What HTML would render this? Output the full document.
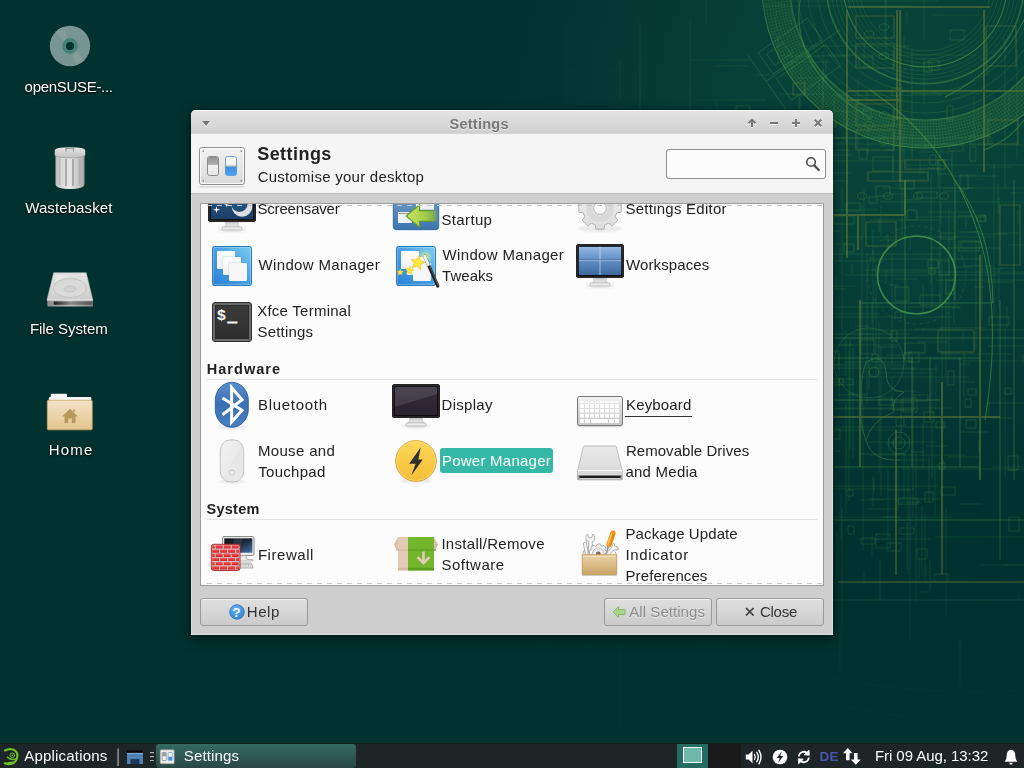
<!DOCTYPE html>
<html>
<head>
<meta charset="utf-8">
<title>Settings</title>
<style>
html,body{margin:0;padding:0}
body{width:1024px;height:768px;overflow:hidden;position:relative;background:#01322f;font-family:"Liberation Sans",sans-serif;font-size:15px;color:#222}
.abs{position:absolute}
.t{position:absolute;white-space:nowrap;font-size:15px;line-height:20px;color:#222}
.b{font-weight:bold;font-size:14.5px}
svg{position:absolute;left:0;top:0;overflow:visible}
#win{position:absolute;left:191px;top:110px;width:642px;height:525px;background:#cecece;border-radius:5px 5px 0 0;box-shadow:inset 1px 0 0 #dcdcdc,inset -1px 0 0 #dcdcdc,inset 0 -1px 0 #dcdcdc,0 0 0 1px rgba(0,0,0,.16),0 3px 13px rgba(0,0,0,.5)}
#tbar{position:absolute;left:0;top:0;width:642px;height:24px;border-radius:5px 5px 0 0;background:linear-gradient(#fafafa 0,#fafafa 1px,#e4e4e4 1px,#cfcfcf 23px,#dcdcdc 24px)}
#hdr{position:absolute;left:0;top:24px;width:642px;height:60px;background:#f5f5f5;border-bottom:1px solid #b9b9b9;box-sizing:border-box}
#search{position:absolute;left:475px;top:39px;width:160px;height:30px;box-sizing:border-box;border:1px solid #8f8f8f;border-radius:3px;background:#fcfcfc}
#frame{position:absolute;left:9px;top:93px;width:624px;height:383px;box-sizing:border-box;border:1px solid #9d9d9d;background:#fcfcfc;overflow:hidden}
.sep{position:absolute;left:6px;width:610px;height:1px;background:#e2e2e2}
.dash{position:absolute;left:1px;width:620px;height:1px;background:repeating-linear-gradient(90deg,transparent 0,transparent 5px,#c6c6c6 5px,#c6c6c6 10px)}
.btn{position:absolute;top:488px;height:28px;box-sizing:border-box;border:1px solid #9a9a9a;border-radius:3px;background:linear-gradient(#dfdfdf,#cbcbcb);box-shadow:inset 0 1px 0 rgba(255,255,255,.55);font-size:15.5px;color:#333;white-space:nowrap;letter-spacing:.2px}
#panel{position:absolute;left:0;top:743px;width:1024px;height:25px;background:#1d2527;color:#fff;font-size:15.5px;border-top:1px solid #151b1c;box-sizing:border-box}
</style>
</head>
<body>
<svg id="bp" width="1024" height="768" viewBox="0 0 1024 768"><defs><radialGradient id="wg1" gradientUnits="userSpaceOnUse" cx="905" cy="110" r="470" gradientTransform="translate(905 110) scale(1 .95) translate(-905 -110)"><stop offset="0" stop-color="#09473a" stop-opacity=".95"/><stop offset=".35" stop-color="#074239" stop-opacity=".9"/><stop offset=".65" stop-color="#053b36" stop-opacity=".65"/><stop offset="1" stop-color="#01322f" stop-opacity="0"/></radialGradient><radialGradient id="wfade" gradientUnits="userSpaceOnUse" cx="930" cy="250" r="480" gradientTransform="translate(930 250) scale(.75 1) translate(-930 -250)"><stop offset="0" stop-color="#fff"/><stop offset=".55" stop-color="#fff" stop-opacity=".9"/><stop offset=".78" stop-color="#fff" stop-opacity=".5"/><stop offset="1" stop-color="#fff" stop-opacity=".1"/></radialGradient><mask id="wm" maskUnits="userSpaceOnUse" x="0" y="0" width="1024" height="768"><rect width="1024" height="768" fill="url(#wfade)"/></mask></defs><rect width="1024" height="768" fill="url(#wg1)"/><g mask="url(#wm)" fill="none"><g stroke="#55a04a" stroke-width=".7" opacity=".33"><circle cx="925" cy="-15" r="66"/><circle cx="925" cy="-15" r="70"/><circle cx="925" cy="-15" r="74"/><circle cx="925" cy="-15" r="78"/><circle cx="925" cy="-15" r="82"/><circle cx="925" cy="-15" r="86"/><circle cx="925" cy="-15" r="90"/><circle cx="925" cy="-15" r="94"/><circle cx="925" cy="-15" r="98"/><circle cx="925" cy="-15" r="108"/><circle cx="925" cy="-15" r="118"/><circle cx="925" cy="-15" r="128"/><circle cx="925" cy="-15" r="136"/><circle cx="925" cy="-15" r="139"/><circle cx="925" cy="-15" r="142"/><circle cx="925" cy="-15" r="145"/><circle cx="925" cy="-15" r="148"/><circle cx="925" cy="-15" r="151"/><circle cx="925" cy="-15" r="154"/><circle cx="925" cy="-15" r="157"/><circle cx="925" cy="-15" r="160"/><circle cx="925" cy="-15" r="163"/></g><g stroke="#5fa84c" stroke-width="1.1" opacity=".5"><circle cx="925" cy="-15" r="82"/><circle cx="925" cy="-15" r="99"/><circle cx="925" cy="-15" r="135"/><circle cx="925" cy="-15" r="163"/></g><circle cx="925" cy="-15" r="149" stroke="#4f9a48" stroke-width="27" opacity=".13"/><path stroke="#55a04a" stroke-width=".5" opacity=".38" d="M1051.4 35.1L1075.6 44.6M1050.4 37.6L1074.4 47.6M1049.4 40.1L1073.1 50.6M1048.2 42.5L1071.8 53.5M1047.1 45L1070.4 56.4M1045.9 47.4L1069 59.3M1044.6 49.8L1067.4 62.2M1043.3 52.1L1065.9 65M1041.9 54.5L1064.3 67.8M1040.5 56.8L1062.6 70.5M1039.1 59.1L1060.9 73.2M1037.6 61.3L1059.1 75.9M1036 63.5L1057.2 78.6M1034.4 65.7L1055.4 81.2M1032.8 67.9L1053.4 83.8M1031.1 70L1051.4 86.3M1029.4 72.1L1049.4 88.8M1027.7 74.2L1047.3 91.2M1025.9 76.2L1045.2 93.7M1024 78.2L1043 96M1022.2 80.2L1040.7 98.3M1020.3 82.1L1038.5 100.6M1018.3 83.9L1036.1 102.9M1016.3 85.8L1033.8 105M1014.3 87.6L1031.4 107.2M1012.2 89.3L1028.9 109.3M1010.1 91L1026.4 111.3M1008 92.7L1023.9 113.3M1005.9 94.4L1021.3 115.3M1003.7 95.9L1018.7 117.1M1001.4 97.5L1016.1 119M999.2 99L1013.4 120.8M996.9 100.4L1010.7 122.5M994.6 101.8L1007.9 124.2M992.3 103.2L1005.1 125.8M989.9 104.5L1002.3 127.4M987.5 105.8L999.5 128.9M985.1 107L996.6 130.3M982.6 108.2L993.7 131.7M980.2 109.3L990.7 133.1M977.7 110.4L987.8 134.3M975.2 111.4L984.8 135.6M972.7 112.4L981.8 136.7M970.1 113.3L978.8 137.8M967.6 114.2L975.7 138.9M965 115L972.6 139.8M962.4 115.8L969.5 140.8M959.8 116.5L966.4 141.6M957.2 117.1L963.3 142.4M954.5 117.8L960.2 143.1M951.9 118.3L957 143.8M949.2 118.8L953.9 144.4M946.6 119.3L950.7 145M943.9 119.7L947.5 145.4M941.2 120L944.3 145.8M938.5 120.3L941.1 146.2M935.8 120.6L937.9 146.5M933.1 120.8L934.7 146.7M930.4 120.9L931.4 146.9M927.7 121L928.2 147M925 121L925 147M922.3 121L921.8 147M919.6 120.9L918.6 146.9M916.9 120.8L915.3 146.7M914.2 120.6L912.1 146.5M911.5 120.3L908.9 146.2M908.8 120L905.7 145.8M906.1 119.7L902.5 145.4M903.4 119.3L899.3 145M900.8 118.8L896.1 144.4M898.1 118.3L893 143.8M895.5 117.8L889.8 143.1M892.8 117.1L886.7 142.4M890.2 116.5L883.6 141.6M887.6 115.8L880.5 140.8M885 115L877.4 139.8M882.4 114.2L874.3 138.9M879.9 113.3L871.2 137.8M877.3 112.4L868.2 136.7M874.8 111.4L865.2 135.6M872.3 110.4L862.2 134.3M869.8 109.3L859.3 133.1M867.4 108.2L856.3 131.7M864.9 107L853.4 130.3M862.5 105.8L850.5 128.9M860.1 104.5L847.7 127.4M857.7 103.2L844.9 125.8M855.4 101.8L842.1 124.2M853.1 100.4L839.3 122.5M850.8 99L836.6 120.8M848.6 97.5L833.9 119M846.3 95.9L831.3 117.1M844.1 94.4L828.7 115.3M842 92.7L826.1 113.3M839.9 91L823.6 111.3M837.8 89.3L821.1 109.3M835.7 87.6L818.6 107.2M833.7 85.8L816.2 105M831.7 83.9L813.9 102.9M829.7 82.1L811.5 100.6M827.8 80.2L809.3 98.3M826 78.2L807 96M824.1 76.2L804.8 93.7M822.3 74.2L802.7 91.2M820.6 72.1L800.6 88.8M818.9 70L798.6 86.3M817.2 67.9L796.6 83.8M815.6 65.7L794.6 81.2M814 63.5L792.8 78.6M812.4 61.3L790.9 75.9M810.9 59.1L789.1 73.2M809.5 56.8L787.4 70.5M808.1 54.5L785.7 67.8M806.7 52.1L784.1 65M805.4 49.8L782.6 62.2M804.1 47.4L781 59.3M802.9 45L779.6 56.4M801.8 42.5L778.2 53.5M800.6 40.1L776.9 50.6M799.6 37.6L775.6 47.6M798.6 35.1L774.4 44.6M797.6 32.5L773.2 41.6M796.7 30L772.1 38.6M795.8 27.4L771.1 35.5M795 24.9L770.1 32.5M794.2 22.3L769.2 29.4M793.5 19.6L768.3 26.3M792.8 17L767.6 23.1M792.2 14.4L766.8 20M791.7 11.7L766.2 16.9M791.1 9.1L765.6 13.7M790.7 6.4L765 10.5M790.3 3.7L764.5 7.3M790 1.1L764.1 4.1M789.7 -1.6L763.8 0.9"/><g stroke="#4e9c53"><circle cx="916.5" cy="275" r="39" stroke-width="1.6" opacity=".8"/><circle cx="916.5" cy="275" r="49" stroke-width=".6" opacity=".35" stroke-dasharray="4 3"/><circle cx="869" cy="363" r="35" stroke-width=".9" opacity=".35"/><circle cx="899" cy="443" r="11" stroke-width=".8" opacity=".45"/><circle cx="899" cy="443" r="6" stroke-width=".8" opacity=".45"/><circle cx="874" cy="372" r="5" stroke-width=".8" opacity=".5"/></g><g stroke="#4a9a4a" stroke-width="1.1" opacity=".6"><path d="M953 178 Q992 228 993 303"/><path d="M870 90 Q960 150 985 258 Q1000 330 985 420"/><path d="M945 97 Q1000 70 1024 20"/><path d="M800 0 Q790 70 870 118"/><path d="M984 150 Q1010 140 1024 120"/><path d="M720 655 Q850 735 1024 715" opacity=".45"/><path d="M700 640 Q850 700 1024 690" opacity=".3"/></g><path stroke="#4a9a50" stroke-width=".9" opacity=".5" d="M866 362 Q884 352 886 372 Q886 392 904 392 Q890 400 894 412 Q872 420 866 440 Q858 420 862 395 Q860 378 866 362Z M866 440 Q872 462 900 460"/><path stroke="#6a7a34" stroke-width="2" opacity=".58" d="M900 10L900 182M897 10L897 120M984 10L984 172M847 10L847 258M848 7L990 7M848 91L1024 91M848 100L900 100M980 255L980 480M860 300L860 467M833 417L1000 417M838 582L1024 582M896 430L896 575M833 215L905 215M858 215L858 250M905 180L905 215M768 172L768 250M690 250L830 250M942 382L942 575"/><path stroke="#66783a" stroke-width="1.2" opacity=".5" d="M856 16h38v22h-38zM856 44h38v24h-38zM856 104h38v22h-38zM856 130h38v20h-38zM868 172h60v9h-60zM905 160h40v9h-40zM735 118h9v9h-9zM793 83h12v12h-12zM986 26h30v40h-30zM988 120h30v24h-30zM1000 205h20v60h-20zM938 330h36v22h-36zM866 222h30v24h-30z"/><g stroke="#5d8a44" stroke-width=".8" opacity=".5"><ellipse cx="884" cy="27" rx="4.5" ry="3.2"/><ellipse cx="884" cy="56" rx="4.5" ry="3.2"/><ellipse cx="884" cy="115" rx="4.5" ry="3.2"/><ellipse cx="884" cy="141" rx="4.5" ry="3.2"/><ellipse cx="862" cy="196" rx="4.5" ry="3.2"/><ellipse cx="888" cy="196" rx="4.5" ry="3.2"/><ellipse cx="918" cy="196" rx="4.5" ry="3.2"/><ellipse cx="944" cy="196" rx="4.5" ry="3.2"/><ellipse cx="869" cy="125" rx="4.5" ry="3.2"/><ellipse cx="869" cy="34" rx="4.5" ry="3.2"/></g><path stroke="#479650" stroke-width="1" opacity=".5" d="M859 303L993 303M833 358L980 358M833 467L980 467M1014 180L1014 480M833 338L1024 338M905 180L905 360M955 180L955 300M833 400L940 400M912 358L912 467M930 358L930 420M960 358L960 467M700 300L700 560M740 330L740 560M833 520L1024 520M1000 300L1000 560M833 180L833 575M620 60L620 100M640 20L640 110"/><g stroke="#4a9a50" stroke-width=".8" opacity=".45" transform="rotate(-35 800 60)"><rect x="770" y="30" width="60" height="26"/><rect x="770" y="62" width="60" height="26"/><rect x="776" y="36" width="20" height="14"/><path d="M760 58H850M760 26V96"/></g><path stroke="#4a8f4c" stroke-width=".7" opacity=".34" d="M876 397h10M817 240v10M859 377h110M989 402v14M819 82v10M892 397v14M771 166v14M846 128v14M823 68v110M660 392h70M910 489v150M888 118h14M766 453v22M691 537v14M696 100h70M764 489h150M961 382h14M789 1h150M799 490v10M750 517h150M896 180h30M990 167h22M717 102v110M888 469v70M848 394h14M913 367v150M926 446h22M821 478v22M769 262h10M799 46h110M1007 470h10M1000 268h14M907 280v22M1029 192v14M864 189v46M819 140v14M936 280h150M980 565h46M864 38v30M852 264v10M864 571v14M888 490h22M925 513v70M778 33v30M922 506v70M809 314h70M977 234h30M820 251v150M768 322v14M959 432h30M999 198v110M942 353h22M816 152v22M781 155h70M886 270v14M998 184v30M923 422v46M912 49v110M1017 49v110M941 202v22M1007 306v22M903 172h22M886 -10v70M798 237v14M963 333v10M776 277h14M819 113v30M793 291v150M907 523v46M880 202h150M979 440v14M846 330v46M914 217h70M802 435h30M766 395h70M844 362h70M803 215h10M819 271h14M958 216h14M807 360v150M922 329h22M792 1v14M911 452h14M841 493v46M901 399v46M842 187v150M943 459v10M923 284v30M908 464v110M714 142v46M981 269h22M876 347h22M876 265v110M868 125v30M940 328h46M1008 245h30M943 191h22M811 451h30M905 200h14M801 181h46M919 556v22M765 409h150M1009 94v22M907 13v10M717 66h30M994 164v150M797 78h30M904 35v14M881 373h46M833 138h150M825 428v46M804 81v14M837 533v46M903 469h150M761 6h150M799 191v150M1025 256v46M846 275h150M984 282h30M898 465v46M810 144h150M854 95h22M836 365h70M827 486h110M931 174v110M952 150v10M870 455h70M1010 193h14M893 50v22M887 355h22M839 354v46M963 266h30M816 205v22M1005 328v150M748 345h150M826 244h22M964 351v46M856 330h110M880 146h46M941 354h70M756 284h30M905 165h150M954 213v110M915 145h150M736 518v150M894 391h22M875 272h150M895 279h22M1025 121v46M823 51v110M918 342h30M926 566v10M982 251v70M985 116v30M978 330h46M881 206v30M966 217v10M832 95h110M826 286h30M919 152h30M940 150v150M992 138v10M948 457h30M819 166h10M763 358v70M801 408h150M858 79v70M855 326h14M929 457v46M802 317h150M770 231h70M869 259h110M782 138h110M951 176h46M932 237v70M756 75h14M916 452v150M850 339v110M980 467v10M924 -29v70M744 373v14M806 368h110M988 346h70M858 334h14M942 263v150M952 267h22M801 67v14M861 454h46M885 150h30M897 460h30M836 276v14M949 209v150M882 517h70M892 377v30M927 168h14M974 96v46M865 270h70M869 360v30M911 94h70M881 346v150M946 273v110M960 504h22M851 100h10M768 210h110M792 125h110M749 414v110M786 562h22M721 194h110M828 150h22M874 539h14M719 313h30M845 237h150M800 96v14M776 10v22M987 46v30M932 369v110M944 455h22M1023 354v10M863 401v150M793 161h110M870 499h70M811 307h150M780 311v150M934 93h14M867 254v150M879 240h22M873 230v110M910 236v14M667 306v22M893 109v70M904 453v46M760 334h150M861 539h70M935 470v46M928 212h46M772 198v70M788 364h14M687 198h70M994 274h70M960 364h10M824 237v70M904 118v46M796 394h10M920 592h10M831 182v70M825 382h22M817 123h22M872 302v22M924 58v46M1005 39v150M795 252v22M963 361h110M993 467h30M946 508v110M942 428v46M788 271v110M827 55h150M974 287h10M970 232h10M786 215h46M991 418h22M797 427h150M889 285h10M885 -2v46M796 465h22M938 307h22M914 329h10M888 234v14M986 403h70M1018 210v14M837 395h30M933 15h46M1003 565h30M832 430h70M849 351v150M832 254h110M862 204v150M840 248v14M867 509h30M870 220h70M736 299v22M706 -23v46M958 232h22M879 218v14M846 403v110M897 70h10M861 500h22M882 188h150M779 111h10M879 323v150M902 87v150M867 442h70M943 188h30M792 49v30M820 173h30M892 194h14M936 364v46M840 345h14M980 135h10M696 289h150M976 240v110M788 117v30M826 59v30M804 111h70M899 502h22M812 342v110M967 175h10M643 326h10M930 248h70M799 97v150M733 261h150M867 91v14M780 94h46M892 255v110M784 62h46M873 476v30M997 233h22M834 98v30M935 537h110M872 534v22M727 360h30M853 348v110M711 334h46M783 138h150M779 56h70M874 479v14M1019 591v10M891 369h46M932 359h30M746 384v30M920 160v14M938 157v30M900 58v14M888 443h22M803 194v22M901 416h10M842 508v150"/><path stroke="#5a9a4a" stroke-width=".7" opacity=".4" d="M949 145h14v6h-14zM939 463h6v6h-6zM806 117h10v6h-10zM807 285h8v6h-8zM925 492h8v10h-8zM1008 456h10v14h-10zM924 62h8v10h-8zM823 379h20v6h-20zM938 160h14v14h-14zM960 175h8v14h-8zM925 136h10v10h-10zM818 443h14v6h-14zM872 354h6v8h-6zM947 106h6v14h-6zM816 121h20v6h-20zM934 574h14v8h-14zM948 371h6v14h-6zM859 149h8v10h-8zM844 244h10v8h-10zM839 379h14v6h-14zM802 303h6v14h-6zM736 106h14v6h-14zM989 317h20v8h-20zM818 330h6v6h-6zM869 197h8v6h-8zM895 312h6v6h-6zM914 395h14v6h-14zM887 543h14v8h-14zM977 215h8v6h-8zM876 534h14v14h-14zM929 268h6v6h-6zM859 57h14v10h-14zM861 538h14v6h-14zM892 88h8v8h-8zM946 280h8v14h-8zM759 348h14v10h-14zM929 60h10v10h-10zM848 526h6v8h-6zM846 203h14v8h-14zM813 502h20v8h-20zM930 155h6v10h-6zM898 498h20v6h-20zM894 402h20v8h-20zM950 30h14v10h-14zM802 249h14v14h-14zM961 242h20v6h-20zM863 109h8v10h-8zM895 287h14v14h-14zM803 241h10v6h-10zM917 549h10v10h-10zM793 337h8v8h-8zM924 412h10v10h-10zM834 216h20v8h-20zM735 316h10v14h-10zM917 192h20v6h-20zM847 490h6v6h-6zM970 136h20v8h-20zM721 506h20v8h-20zM904 353h8v8h-8zM891 331h6v10h-6zM970 147h6v14h-6zM968 389h8v6h-8zM832 429h8v10h-8zM909 352h10v10h-10zM1005 388h6v6h-6zM900 528h14v6h-14zM965 399h6v8h-6zM873 157h20v14h-20zM907 210h10v10h-10zM903 398h14v14h-14zM936 422h8v6h-8zM721 384h6v8h-6zM959 241h20v10h-20zM941 233h14v6h-14zM980 216h6v6h-6zM831 351h8v14h-8zM966 420h10v8h-10zM900 181h14v8h-14zM860 340h14v14h-14zM905 343h20v10h-20zM879 399h14v6h-14zM876 186h14v10h-14zM1009 517h10v14h-10zM939 261h10v14h-10zM928 260h10v8h-10zM920 295h20v10h-20zM813 286h20v10h-20zM941 487h14v8h-14zM896 418h8v8h-8z"/><path stroke="#3f8f58" stroke-width=".7" opacity=".5" d="M566 110V20M566 40h40M566 70h60M690 20v90M690 60h60M560 600h464M590 570v170M620 600v130M545 600a5 5 0 1 0 .1 0M545 626a5 5 0 1 0 .1 0M545 645a5 5 0 1 0 .1 0M710 590v60M840 630v40M960 640v50M880 560v40M930 560v30"/></g></svg>
<!-- desktop icons -->
<svg width="1024" height="768" viewBox="0 0 1024 768">
 <defs>
  <linearGradient id="gTrash" x1="0" x2="1" y1="0" y2="0"><stop offset="0" stop-color="#b9b9b9"/><stop offset=".2" stop-color="#d8d8d8"/><stop offset=".5" stop-color="#e6e6e6"/><stop offset=".8" stop-color="#c4c4c4"/><stop offset="1" stop-color="#a2a2a2"/></linearGradient>
  <linearGradient id="gLid" x1="0" x2="0" y1="0" y2="1"><stop offset="0" stop-color="#e4e4e4"/><stop offset="1" stop-color="#c2c2c2"/></linearGradient>
  <linearGradient id="gFold" x1="0" x2="0" y1="0" y2="1"><stop offset="0" stop-color="#f3e2c6"/><stop offset="1" stop-color="#e3c58e"/></linearGradient>
  <linearGradient id="gHdd" x1="0" x2="0" y1="0" y2="1"><stop offset="0" stop-color="#e4e4e4"/><stop offset="1" stop-color="#cdcdcd"/></linearGradient>
  <linearGradient id="gHddF" x1="0" x2="1" y1="0" y2="0"><stop offset="0" stop-color="#8a8a8a"/><stop offset=".5" stop-color="#bdbdbd"/><stop offset="1" stop-color="#8a8a8a"/></linearGradient>
  <linearGradient id="gSlot" x1="0" x2="1" y1="0" y2="0"><stop offset="0" stop-color="#222"/><stop offset=".45" stop-color="#8a8a8a"/><stop offset="1" stop-color="#555"/></linearGradient>
 </defs>
 <!-- disc -->
 <g opacity=".97">
  <circle cx="70" cy="46" r="20.2" fill="#7c9997"/>
  <path d="M70 46 L55 32 A20.2 20.2 0 0 1 64 27Z" fill="#93a79a" opacity=".55"/>
  <path d="M70 46 L85 60 A20.2 20.2 0 0 1 76 65Z" fill="#93a79a" opacity=".55"/>
  <circle cx="70" cy="46" r="7.9" fill="#4c857b"/>
  <circle cx="70" cy="46" r="4" fill="#01342f"/>
 </g>
 <!-- trash -->
 <g>
  <path d="M55.5 156 L84.5 156 L84.5 184 Q84.5 189 70 189 Q55.5 189 55.5 184Z" fill="url(#gTrash)"/>
  <rect x="65" y="159" width="2" height="27" fill="#9d9d9d" opacity=".8"/>
  <rect x="72" y="159" width="2" height="27" fill="#9d9d9d" opacity=".8"/>
  <rect x="59" y="159" width="1.5" height="26" fill="#a8a8a8" opacity=".6"/>
  <rect x="79" y="159" width="1.5" height="26" fill="#a0a0a0" opacity=".6"/>
  <path d="M54.8 150.5 Q54.8 147.3 70 147.3 Q85.2 147.3 85.2 150.5 L85.2 155 Q85.2 157.8 70 157.8 Q54.8 157.8 54.8 155Z" fill="url(#gLid)"/>
  <path d="M54.8 154.5 Q54.8 157.8 70 157.8 Q85.2 157.8 85.2 154.5" fill="none" stroke="#9a9a9a" stroke-width=".8"/>
  <path d="M66 151.5 V148.3 H73.5 V151.5" fill="none" stroke="#9a9a9a" stroke-width="1.3"/>
 </g>
 <!-- hdd -->
 <g>
  <path d="M53.7 272.8 L86.2 272.8 L92.8 300 L47 300Z" fill="url(#gHdd)" stroke="#bdbdbd" stroke-width=".6"/>
  <ellipse cx="70" cy="288" rx="16.5" ry="9.5" fill="#dadada" stroke="#c1c1c1" stroke-width=".9"/>
  <ellipse cx="70" cy="289" rx="6" ry="3" fill="#d2d2d2" stroke="#bfbfbf" stroke-width=".8"/>
  <path d="M55 283 Q60 278 69 276 L57 275.3 Z" fill="#ececec" opacity=".8"/>
  <path d="M47 300 H92.8 V306.5 H47.6Z" fill="url(#gHddF)"/>
  <rect x="53.7" y="301.5" width="38.5" height="3.3" fill="url(#gSlot)"/>
  <rect x="47" y="299.5" width="45.8" height="1" fill="#efefef"/>
 </g>
 <!-- home folder -->
 <g>
  <path d="M50.8 394.8 Q50.8 393.8 51.8 393.8 H66 Q67 393.8 67 394.8 V397 H90.5 Q91.3 397 91.3 398 V402 H48.8 V398 Q48.8 397 50.8 396.8Z" fill="#f4f4f7"/>
  <rect x="47.3" y="400.3" width="44.9" height="29.5" rx="1" fill="url(#gFold)" stroke="#caa667" stroke-width=".8"/>
  <path d="M70 408.8 L78 416.5 H75.5 V423 H71.8 V418.5 H68.2 V423 H64.5 V416.5 H62 Z" fill="#b9995f"/>
  <rect x="73.3" y="409.5" width="1.5" height="2.5" fill="#b9995f"/>
 </g>
</svg>
<span class="t" style="left:24.6px;top:77px;letter-spacing:-0.3px;color:#fff;text-shadow:0 1px 2px rgba(0,0,0,.95),0 0 2px rgba(0,0,0,.6);">openSUSE-...</span>
<span class="t" style="left:25.2px;top:198px;letter-spacing:0.1px;color:#fff;text-shadow:0 1px 2px rgba(0,0,0,.95),0 0 2px rgba(0,0,0,.6);">Wastebasket</span>
<span class="t" style="left:29.9px;top:319px;letter-spacing:-0.05px;color:#fff;text-shadow:0 1px 2px rgba(0,0,0,.95),0 0 2px rgba(0,0,0,.6);">File System</span>
<span class="t" style="left:48.8px;top:440px;letter-spacing:1.2px;color:#fff;text-shadow:0 1px 2px rgba(0,0,0,.95),0 0 2px rgba(0,0,0,.6);">Home</span>
<div id="win">
 <div id="tbar"><span class="t b" style="left:258.5px;top:4px;letter-spacing:0.25px;color:#777;text-shadow:0 1px 0 rgba(255,255,255,.7);">Settings</span>
  <svg width="641" height="24" viewBox="0 0 641 24">
   <path d="M11 12 H19 L15 17Z" fill="#fff"/>
   <path d="M11 11 H19 L15 16Z" fill="#777"/>
   <g stroke="#fff" stroke-width="2" fill="none" transform="translate(0,1)">
    <path d="M561 17 V10.5 M557.5 13.3 L561 9.8 L564.5 13.3"/>
    <path d="M579 13 H587"/>
    <path d="M601 13 H609 M605 9 V17"/>
    <path d="M623.7 9.7 L630.3 16.3 M630.3 9.7 L623.7 16.3"/>
   </g>
   <g stroke="#777" stroke-width="2" fill="none">
    <path d="M561 17 V10.5 M557.5 13.3 L561 9.8 L564.5 13.3"/>
    <path d="M579 13 H587"/>
    <path d="M601 13 H609 M605 9 V17"/>
    <path d="M623.7 9.7 L630.3 16.3 M630.3 9.7 L623.7 16.3"/>
   </g>
  </svg>
 </div>
 <div id="hdr"></div>
 <div id="search"></div>
 <svg width="641" height="90" viewBox="191 110 641 90">
  <defs>
   <linearGradient id="gPl" x1="0" x2="0" y1="0" y2="1"><stop offset="0" stop-color="#f2f2f2"/><stop offset="1" stop-color="#dadada"/></linearGradient>
   <linearGradient id="gSwW" x1="0" x2="0" y1="0" y2="1"><stop offset="0" stop-color="#fdfdfd"/><stop offset="1" stop-color="#e4e4e4"/></linearGradient>
   <linearGradient id="gSwG" x1="0" x2="0" y1="0" y2="1"><stop offset="0" stop-color="#909090"/><stop offset="1" stop-color="#b2b2b2"/></linearGradient>
   <linearGradient id="gSwB" x1="0" x2="0" y1="0" y2="1"><stop offset="0" stop-color="#3b8ade"/><stop offset="1" stop-color="#55a4ec"/></linearGradient>
  </defs>
  <rect x="199.5" y="186" width="45" height="1.5" fill="#000" opacity=".12"/>
  <rect x="199.5" y="147.5" width="45" height="37" rx="2" fill="url(#gPl)" stroke="#8f8f8f"/>
  <rect x="200.5" y="148.5" width="43" height="35" rx="1.5" fill="none" stroke="#fff" opacity=".8"/>
  <g fill="#8a8a8a"><rect x="202.5" y="150.5" width="1.5" height="1.5"/><rect x="240.5" y="150.5" width="1.5" height="1.5"/><rect x="202.5" y="180" width="1.5" height="1.5"/><rect x="240.5" y="180" width="1.5" height="1.5"/></g>
  <rect x="207.5" y="156.5" width="11" height="19" rx="2" fill="url(#gSwW)" stroke="#8a8a8a"/>
  <path d="M208 158.5 Q208 157 209.5 157 H216.5 Q218 157 218 158.5 V165 H208Z" fill="url(#gSwG)"/>
  <rect x="225.5" y="156.5" width="11" height="19" rx="2" fill="url(#gSwW)" stroke="#6e9fd6"/>
  <path d="M225.5 166.5 H236.5 V174 Q236.5 175.5 235 175.5 H227 Q225.5 175.5 225.5 174Z" fill="url(#gSwB)"/>
  <path d="M226 166 H236" stroke="#9a9a9a" stroke-width=".8"/>
  <!-- search icon -->
  <circle cx="811" cy="162" r="4.3" fill="none" stroke="#4a4a4a" stroke-width="1.6"/>
  <path d="M814.2 165.4 L818.8 170" stroke="#4a4a4a" stroke-width="2.2" stroke-linecap="round"/>
 </svg>
 <span class="t b" style="left:66.2px;top:34px;letter-spacing:0.45px;font-size:18px;">Settings</span>
 <span class="t" style="left:66.7px;top:56.5px;letter-spacing:0.25px;">Customise your desktop</span>
 <div id="frame">
  <svg width="622" height="381" viewBox="201 204 622 381">
   <defs>
    <linearGradient id="gNeck" x1="0" x2="0" y1="0" y2="1"><stop offset="0" stop-color="#bdbdbd"/><stop offset="1" stop-color="#f2f2f2"/></linearGradient>
    <linearGradient id="gScrB" x1="0" x2="0" y1="0" y2="1"><stop offset="0" stop-color="#93b8e4"/><stop offset=".5" stop-color="#5f8cc2"/><stop offset="1" stop-color="#3b689f"/></linearGradient>
    <linearGradient id="gScrN" x1="0" x2="0" y1="0" y2="1"><stop offset="0" stop-color="#2a5a8a"/><stop offset="1" stop-color="#1b4068"/></linearGradient>
    <linearGradient id="gScrD" x1="0" x2="0" y1="0" y2="1"><stop offset="0" stop-color="#352f39"/><stop offset="1" stop-color="#29222d"/></linearGradient>
    <linearGradient id="gWm" x1="1" x2="0" y1="0" y2="1"><stop offset="0" stop-color="#7fcdee"/><stop offset=".45" stop-color="#4aa3e4"/><stop offset="1" stop-color="#2a7fd3"/></linearGradient>
    <linearGradient id="gSq" x1="0" x2="0" y1="0" y2="1"><stop offset="0" stop-color="#fdfdfd"/><stop offset="1" stop-color="#f0f0f0"/></linearGradient>
    <linearGradient id="gSt" x1="0" x2="0" y1="0" y2="1"><stop offset="0" stop-color="#7ba6cc"/><stop offset="1" stop-color="#3c74ad"/></linearGradient>
    <linearGradient id="gArr" x1="0" x2="1" y1="0" y2="0"><stop offset="0" stop-color="#c6e36a"/><stop offset=".6" stop-color="#a2cc44"/><stop offset=".85" stop-color="#8dbb3a" stop-opacity=".8"/><stop offset="1" stop-color="#8dbb3a" stop-opacity="0"/></linearGradient>
    <linearGradient id="gArrS" x1="0" x2="1" y1="0" y2="0"><stop offset="0" stop-color="#5d9a1c"/><stop offset=".7" stop-color="#5d9a1c"/><stop offset="1" stop-color="#5d9a1c" stop-opacity="0"/></linearGradient>
    <linearGradient id="gGear" x1="0" x2="0" y1="0" y2="1"><stop offset="0" stop-color="#f2f2f2"/><stop offset="1" stop-color="#dcdcdc"/></linearGradient>
    <linearGradient id="gBt" x1="0" x2="0" y1="0" y2="1"><stop offset="0" stop-color="#5b8fcc"/><stop offset=".5" stop-color="#3a70b3"/><stop offset="1" stop-color="#4a80c0"/></linearGradient>
    <linearGradient id="gKb" x1="0" x2="0" y1="0" y2="1"><stop offset="0" stop-color="#ededed"/><stop offset="1" stop-color="#c6c6c6"/></linearGradient>
    <linearGradient id="gMs" x1="0" x2="1" y1="0" y2="1"><stop offset="0" stop-color="#f2f2f2"/><stop offset=".5" stop-color="#ebebeb"/><stop offset=".52" stop-color="#e6e6e6"/><stop offset="1" stop-color="#e8e8e8"/></linearGradient>
    <linearGradient id="gPw" x1="0" x2="0" y1="0" y2="1"><stop offset="0" stop-color="#fdd75a"/><stop offset="1" stop-color="#f5bf36"/></linearGradient>
    <linearGradient id="gRm" x1="0" x2="0" y1="0" y2="1"><stop offset="0" stop-color="#ececec"/><stop offset="1" stop-color="#d4d4d4"/></linearGradient>
    <linearGradient id="gBrick" x1="0" x2="0" y1="0" y2="1"><stop offset="0" stop-color="#f8585a"/><stop offset="1" stop-color="#dc1c22"/></linearGradient>
    <linearGradient id="gFwS" x1="0" x2="1" y1="0" y2="1"><stop offset="0" stop-color="#151515"/><stop offset=".5" stop-color="#1e2a3a"/><stop offset="1" stop-color="#3f72ad"/></linearGradient>
    <linearGradient id="gBox" x1="0" x2="0" y1="0" y2="1"><stop offset="0" stop-color="#ecd3a6"/><stop offset="1" stop-color="#c9a468"/></linearGradient>
    <linearGradient id="gTerm" x1="0" x2="0" y1="0" y2="1"><stop offset="0" stop-color="#3c3c3c"/><stop offset="1" stop-color="#2e2e2e"/></linearGradient>
    <radialGradient id="gGlow"><stop offset="0" stop-color="#f4f7a0" stop-opacity=".95"/><stop offset="1" stop-color="#d8f080" stop-opacity="0"/></radialGradient>
    <g id="mon">
     <ellipse cx="24" cy="42" rx="14" ry="2" fill="#000" opacity=".1" filter="url(#bl)"/>
     <path d="M18 33 H30 L31.5 39.5 H16.5Z" fill="url(#gNeck)" stroke="#b4b4b4" stroke-width=".5"/>
     <rect x="14" y="38.8" width="20" height="3.2" rx="1.6" fill="#ececec" stroke="#a9a9a9" stroke-width=".7"/>
     <rect x="0" y="0" width="48" height="34" rx="2.5" fill="#0c0c0c"/>
     <rect x="1" y="1" width="46" height="32" rx="2" fill="none" stroke="#3c3c3c" stroke-width="1"/>
    </g>
    <filter id="bl" x="-20%" y="-100%" width="140%" height="300%"><feGaussianBlur stdDeviation="1.3"/></filter>
    <path id="star" d="M0 -1 L.26 -.36 L.95 -.31 L.42 .14 L.59 .81 L0 .44 L-.59 .81 L-.42 .14 L-.95 -.31 L-.26 -.36Z"/>
   </defs>

   <!-- screensaver -->
   <use href="#mon" x="208" y="188"/>
   <rect x="210.8" y="190.8" width="42.4" height="28.2" fill="url(#gScrN)"/>
   <circle cx="242" cy="206.5" r="10.3" fill="#dde0e3"/>
   <circle cx="239.4" cy="203.6" r="8.3" fill="#22507d"/>
   <path d="M216.5 206 L217.2 209 L220.2 209.7 L217.2 210.4 L216.5 213.4 L215.8 210.4 L212.8 209.7 L215.8 209Z" fill="#fff"/>
   <path d="M226.5 202 L227 204.2 L229.2 204.7 L227 205.2 L226.5 207.4 L226 205.2 L223.8 204.7 L226 204.2Z" fill="#fff"/>

   <!-- startup -->
   <rect x="393.3" y="187" width="45.4" height="42.7" rx="3" fill="url(#gSt)" stroke="#2d639c" stroke-width=".9"/>
   <rect x="398" y="212" width="14" height="11" fill="#eef1f6"/>
   <rect x="399" y="213" width="12" height="1" fill="#999"/>
   <rect x="416" y="196" width="18" height="13.7" fill="#eef1f6"/>
   <path d="M406.2 216 L419.6 204.6 V210.8 H438.5 V221.2 H419.6 V227.4Z" fill="url(#gArr)" stroke="url(#gArrS)" stroke-width="1.1" stroke-linejoin="round"/>

   <!-- settings editor gear -->
   <ellipse cx="600" cy="228.5" rx="22" ry="3.5" fill="#000" opacity=".07" filter="url(#bl)"/>
   <path fill="url(#gGear)" stroke="#ababab" stroke-width=".9" stroke-linejoin="round" d="M604.5 225 L604.2 229.3 L595.8 229.3 L595.5 225 L591.2 223.2 L588 226.1 L582 220.1 L584.9 216.9 L583.1 212.6 L578.8 212.3 L578.8 203.9 L583.1 203.6 L584.9 199.3 L582 196.1 L588 190.1 L591.2 193 L595.5 191.2 L595.8 186.9 L604.2 186.9 L604.5 191.2 L608.8 193 L612 190.1 L618 196.1 L615.1 199.3 L616.9 203.6 L621.2 203.9 L621.2 212.3 L616.9 212.6 L615.1 216.9 L618 220.1 L612 226.1 L608.8 223.2Z"/>
   <circle cx="600" cy="208.1" r="11" fill="none" stroke="#d6d6d6" stroke-width="6" opacity=".8"/>
   <circle cx="600" cy="208.1" r="6.3" fill="#fcfcfc" stroke="#ababab" stroke-width=".9"/>

   <!-- window manager -->
   <rect x="212.5" y="246.5" width="39" height="39" rx="2" fill="url(#gWm)" stroke="#2a78bd"/>
   <rect x="213.5" y="247.5" width="37" height="37" rx="1.5" fill="none" stroke="#fff" opacity=".25"/>
   <rect x="217" y="251" width="18" height="18" rx="1.2" fill="url(#gSq)"/>
   <rect x="222.5" y="256.5" width="19" height="19" rx="1.2" fill="#3a86cf" opacity=".25"/>
   <rect x="223" y="257" width="18" height="18" rx="1.2" fill="url(#gSq)"/>
   <rect x="228.5" y="262.5" width="19" height="19" rx="1.2" fill="#3a86cf" opacity=".25"/>
   <rect x="229" y="263" width="18" height="18" rx="1.2" fill="#f6f6f6"/>

   <!-- wm tweaks -->
   <rect x="396.5" y="246.5" width="39" height="39" rx="2" fill="url(#gWm)" stroke="#2a78bd"/>
   <rect x="397.5" y="247.5" width="37" height="37" rx="1.5" fill="none" stroke="#fff" opacity=".25"/>
   <rect x="401" y="251" width="18" height="18" rx="1.2" fill="url(#gSq)"/>
   <rect x="407" y="257" width="18" height="18" rx="1.2" fill="url(#gSq)"/>
   <rect x="413" y="263" width="18" height="18" rx="1.2" fill="#f6f6f6"/>
   <circle cx="425" cy="257" r="8" fill="url(#gGlow)"/>
   <g fill="#ffe53f" stroke="#f0c020" stroke-width=".08">
    <use href="#star" transform="translate(417.5,263) scale(7.5) rotate(12)"/>
    <use href="#star" transform="translate(409.5,270.5) scale(4.8) rotate(8)"/>
    <use href="#star" transform="translate(400.2,272.4) scale(3.6)"/>
   </g>
   <path d="M424.6 256.2 L437.8 286" stroke="#222" stroke-width="3.2" stroke-linecap="round"/>
   <path d="M425.4 256 L438.4 285.6" stroke="#666" stroke-width=".9" stroke-linecap="round"/>
   <path d="M424.6 256.2 L428.2 264.3" stroke="#f4f4f4" stroke-width="3" stroke-linecap="round"/>

   <!-- workspaces -->
   <use href="#mon" x="576" y="244"/>
   <rect x="578.8" y="246.8" width="42.4" height="28.2" fill="url(#gScrB)"/>
   <path d="M578.8 260.6 H621.2 M600 246.8 V275" stroke="#c4d8f0" stroke-width=".9" opacity=".85"/>
   <path d="M578.8 259.8 H621.2" stroke="#2c5488" stroke-width=".8" opacity=".7"/>

   <!-- terminal -->
   <rect x="212.5" y="302.5" width="39" height="39" rx="2.5" fill="#6c6c6c" stroke="#303030"/>
   <rect x="215.5" y="305.5" width="33" height="33" fill="url(#gTerm)" stroke="#2a2a2a"/>
   <text x="216.8" y="320.3" font-family="Liberation Mono, monospace" font-weight="bold" font-size="15.5" fill="#f6f6f6">$</text>
   <text x="227.7" y="321.3" font-family="Liberation Mono, monospace" font-weight="bold" font-size="15" fill="#f6f6f6" stroke="#f6f6f6" stroke-width="1.1">_</text>

   <!-- bluetooth -->
   <ellipse cx="232" cy="427" rx="15" ry="2" fill="#000" opacity=".08" filter="url(#bl)"/>
   <rect x="215.3" y="382.3" width="33" height="45" rx="16.5" ry="18" fill="url(#gBt)" stroke="#2b5b9c" stroke-width=".9"/>
   <path d="M222.5 398 L242 410.3 L231.6 422 V387.5 L242 399.7 L222.5 414.8" fill="none" stroke="#fff" stroke-width="3" stroke-linejoin="miter"/>

   <!-- display -->
   <use href="#mon" x="392" y="384"/>
   <rect x="394.8" y="386.8" width="42.4" height="28.2" fill="url(#gScrD)"/>
   <path d="M394.8 386.8 H437.2 V394 L394.8 407Z" fill="#fff" opacity=".1"/>

   <!-- keyboard -->
   <rect x="577.5" y="426" width="45" height="1.2" fill="#000" opacity=".15"/>
   <rect x="577.5" y="396.5" width="45" height="29" rx="2" fill="url(#gKb)" stroke="#757575"/>
   <rect x="578.5" y="397.5" width="43" height="3" fill="#f4f4f4" opacity=".7"/>
   <g fill="#fdfdfd"><rect x="580" y="401" width="4" height="2"/><rect x="585" y="401" width="4" height="2"/><rect x="590" y="401" width="4" height="2"/><rect x="595" y="401" width="4" height="2"/><rect x="600" y="401" width="4" height="2"/><rect x="605" y="401" width="4" height="2"/><rect x="610" y="401" width="4" height="2"/><rect x="615" y="401" width="4" height="2"/><rect x="580" y="404" width="4" height="4"/><rect x="585" y="404" width="4" height="4"/><rect x="590" y="404" width="4" height="4"/><rect x="595" y="404" width="4" height="4"/><rect x="600" y="404" width="4" height="4"/><rect x="605" y="404" width="4" height="4"/><rect x="610" y="404" width="4" height="4"/><rect x="615" y="404" width="4" height="4"/><rect x="580" y="409" width="4" height="3.6"/><rect x="585" y="409" width="4" height="3.6"/><rect x="590" y="409" width="4" height="3.6"/><rect x="595" y="409" width="4" height="3.6"/><rect x="600" y="409" width="4" height="3.6"/><rect x="605" y="409" width="4" height="3.6"/><rect x="610" y="409" width="4" height="3.6"/><rect x="615" y="409" width="4" height="3.6"/><rect x="580" y="414" width="4" height="3.6"/><rect x="585" y="414" width="4" height="3.6"/><rect x="590" y="414" width="4" height="3.6"/><rect x="595" y="414" width="4" height="3.6"/><rect x="600" y="414" width="4" height="3.6"/><rect x="605" y="414" width="4" height="3.6"/><rect x="610" y="414" width="4" height="3.6"/><rect x="615" y="414" width="4" height="3.6"/><rect x="580" y="419" width="4" height="4"/><rect x="585" y="419" width="5" height="4"/><rect x="591" y="419" width="17" height="4"/><rect x="609" y="419" width="5" height="4"/><rect x="615" y="419" width="4" height="4"/></g>

   <!-- mouse -->
   <ellipse cx="232" cy="481.5" rx="13" ry="2" fill="#000" opacity=".07" filter="url(#bl)"/>
   <rect x="220.3" y="440" width="23.4" height="42" rx="9.5" ry="11" fill="url(#gMs)" stroke="#bdbdbd" stroke-width=".9"/>
   <circle cx="232" cy="472.6" r="2.4" fill="#f4f4f4" stroke="#c2c2c2" stroke-width=".9"/>

   <!-- power -->
   <ellipse cx="416" cy="481" rx="16" ry="2" fill="#000" opacity=".08" filter="url(#bl)"/>
   <circle cx="416" cy="461" r="20.4" fill="url(#gPw)" stroke="#d59e2e" stroke-width=".9"/>
   <circle cx="416" cy="461" r="19.4" fill="none" stroke="#fff" stroke-width=".8" opacity=".35"/>
   <path d="M420.8 447.3 L409.2 463.8 H415.6 L411.3 475.4 L422.8 459.4 H418.3Z" fill="#303030"/>

   <!-- removable -->
   <rect x="578" y="479.5" width="44" height="1.2" fill="#000" opacity=".1"/>
   <path d="M584.5 446 H615 Q616 446 616.3 447 L622.3 471 V479.6 H577.5 V471 L583.3 447 Q583.6 446 584.5 446Z" fill="url(#gRm)" stroke="#b0b0b0" stroke-width=".8"/>
   <path d="M578 470.5 H622" stroke="#fafafa" stroke-width="1"/>
   <path d="M577.8 475 H622.2 V479.5 H577.8Z" fill="#9c9c9c"/>
   <rect x="579.5" y="475.8" width="41" height="2.4" fill="#1c1c1c"/>
   <rect x="579.5" y="478.2" width="41" height=".9" fill="#e8e8e8"/>

   <!-- firewall -->
   <rect x="222.5" y="536.5" width="31.5" height="19" rx="1.5" fill="#ebebeb" stroke="#8c8c8c"/>
   <rect x="224.3" y="538.3" width="28" height="14.4" fill="url(#gFwS)"/>
   <path d="M234 538.3 H243 L239 552.7 H231Z" fill="#fff" opacity=".08"/>
   <path d="M238 555.5 H246 L247 559.5 H253 V561 H237Z" fill="#e6e6e6" stroke="#999" stroke-width=".6"/>
   <path d="M238 563 H251 L253 568 H237Z" fill="#ececec" stroke="#8a8a8a" stroke-width=".7"/>
   <path d="M240 564.5 H250.5 M240 566 H251.5" stroke="#999" stroke-width=".8" stroke-dasharray="1 .6"/>
   <rect x="211.3" y="544.3" width="28.7" height="26.2" rx="2.5" fill="#c9c9c9" stroke="#b5161a" stroke-width=".9"/>
   <g fill="url(#gBrick)"><rect x="212.2" y="545.2" width="2.5" height="3.3" rx=".6"/><rect x="215.7" y="545.2" width="7" height="3.3" rx=".6"/><rect x="223.7" y="545.2" width="7" height="3.3" rx=".6"/><rect x="231.7" y="545.2" width="7" height="3.3" rx=".6"/><rect x="212.2" y="549.4" width="7" height="3.3" rx=".6"/><rect x="220.2" y="549.4" width="7" height="3.3" rx=".6"/><rect x="228.2" y="549.4" width="7" height="3.3" rx=".6"/><rect x="236.2" y="549.4" width="3" height="3.3" rx=".6"/><rect x="212.2" y="553.6" width="2.5" height="3.3" rx=".6"/><rect x="215.7" y="553.6" width="7" height="3.3" rx=".6"/><rect x="223.7" y="553.6" width="7" height="3.3" rx=".6"/><rect x="231.7" y="553.6" width="7" height="3.3" rx=".6"/><rect x="212.2" y="557.8" width="7" height="3.3" rx=".6"/><rect x="220.2" y="557.8" width="7" height="3.3" rx=".6"/><rect x="228.2" y="557.8" width="7" height="3.3" rx=".6"/><rect x="236.2" y="557.8" width="3" height="3.3" rx=".6"/><rect x="212.2" y="562" width="2.5" height="3.3" rx=".6"/><rect x="215.7" y="562" width="7" height="3.3" rx=".6"/><rect x="223.7" y="562" width="7" height="3.3" rx=".6"/><rect x="231.7" y="562" width="7" height="3.3" rx=".6"/><rect x="212.2" y="566.2" width="7" height="3.3" rx=".6"/><rect x="220.2" y="566.2" width="7" height="3.3" rx=".6"/><rect x="228.2" y="566.2" width="7" height="3.3" rx=".6"/><rect x="236.2" y="566.2" width="3" height="3.3" rx=".6"/></g>

   <!-- install/remove -->
   <path d="M398.2 537 L393.8 544.5 L396.6 549.6 H398.2Z M433.8 537 L438.3 544.5 L435.4 549.6 H433.8Z" fill="#dcbfa8"/>
   <rect x="398" y="537" width="10" height="33.4" fill="#e4cbb7"/>
   <rect x="408" y="537" width="26" height="33.4" fill="#72b62c"/>
   <path d="M396 549.3 H408 V550.6 H396Z" fill="#d2b59e"/>
   <path d="M408 549.3 H436 V550.6 H408Z" fill="#5d9f1e"/>
   <rect x="398" y="567.8" width="10" height="2.6" fill="#d8b9a2"/>
   <rect x="408" y="567.8" width="26" height="2.6" fill="#5a9c1c"/>
   <path d="M423.5 551.5 V562.5 M417.5 557.2 L423.5 563.2 L429.5 557.2" fill="none" stroke="#e4cbb7" stroke-width="2.6"/>

   <!-- package update -->
   <rect x="582" y="574.5" width="35" height="1.5" fill="#000" opacity=".18"/>
   <path d="M582.3 555 L584 550.5 M616.7 555 L615 551.5" stroke="#c9a468" stroke-width=".9"/>
   <g fill="#f7f7f7" stroke="#9c9c9c" stroke-width=".8" stroke-linejoin="round">
    <path d="M585.5 555 L583.3 543 L586.3 541.8 L588.5 555Z"/>
    <path d="M588.2 555 L588.7 541.5 L586 540.5 V535.7 L587.6 534 L588.9 537.6 H591.7 L593 534 L594.6 535.7 V540.5 L592.2 541.8 L593 555Z"/>
    <path d="M589.5 555 L589.3 550.5 L591.3 549.5 L591 546.5 L594 545.3 L595.5 547 L597.5 544 H600.5 L601.5 546.5 L604 545.3 L606 548 L604.7 550 L607 551.5 L606.8 555Z"/>
    <path d="M603.5 555.5 L612 547.3 Q611 544.5 613.8 543 L614.8 546 L617.3 546.5 L618.7 549.3 Q616 551.2 614 549.6 L608.5 555.5Z"/>
   </g>
   <circle cx="598.3" cy="554" r="6" fill="#ececec" stroke="#b0b0b0" stroke-width=".8"/>
   <circle cx="598.3" cy="554" r="2.4" fill="#7d6a58"/>
   <path d="M612.9 533.4 L609 544.6" stroke="#ee981a" stroke-width="5.4" stroke-linecap="round"/>
   <path d="M611.6 534 L608 544.4" stroke="#fbc565" stroke-width="1.3" stroke-linecap="round"/>
   <path d="M614 534.6 L610.3 545" stroke="#d27f10" stroke-width="1" stroke-linecap="round"/>
   <path d="M608.3 546.3 L606 554.5" stroke="#9a9a9a" stroke-width="1.7"/>
   <rect x="582.3" y="554.8" width="34.4" height="19.8" rx=".8" fill="url(#gBox)" stroke="#c19958" stroke-width=".9"/>
   <rect x="583.3" y="555.8" width="32.4" height="1" fill="#f6e6c6" opacity=".9"/>
  </svg>
  <div class="dash" style="top:1px"></div>
  <div class="dash" style="top:379px"></div>
  <div class="sep" style="top:175px"></div>
  <div class="abs" style="left:424px;top:212px;width:67px;height:1px;background:#333"></div>
  <div class="abs" style="left:239px;top:244px;width:113px;height:25px;background:#35b8a6;border-radius:3px"></div>
  <div class="sep" style="top:315px"></div>
  <span class="t" style="left:56.5px;top:-5px;letter-spacing:-0.2px;">Screensaver</span>
  <span class="t" style="left:240.5px;top:6px;letter-spacing:0.35px;">Startup</span>
  <span class="t" style="left:424.5px;top:-5px;letter-spacing:0.25px;">Settings Editor</span>
  <span class="t" style="left:57.5px;top:51px;letter-spacing:0.35px;">Window Manager</span>
  <span class="t" style="left:241.5px;top:41px;letter-spacing:0.35px;">Window Manager</span>
  <span class="t" style="left:241px;top:62px;letter-spacing:0.05px;">Tweaks</span>
  <span class="t" style="left:425.1px;top:51px;letter-spacing:0.1px;">Workspaces</span>
  <span class="t" style="left:56.2px;top:97px;letter-spacing:0.25px;">Xfce Terminal</span>
  <span class="t" style="left:56.5px;top:118px;letter-spacing:0.2px;">Settings</span>
  <span class="t" style="left:57px;top:191px;letter-spacing:0.7px;">Bluetooth</span>
  <span class="t" style="left:240.5px;top:191px;letter-spacing:0.3px;">Display</span>
  <span class="t" style="left:425px;top:191px;letter-spacing:0.15px;">Keyboard</span>
  <span class="t" style="left:56.9px;top:237px;letter-spacing:0.35px;">Mouse and</span>
  <span class="t" style="left:57.2px;top:258px;letter-spacing:0.3px;">Touchpad</span>
  <span class="t" style="left:240.9px;top:247px;letter-spacing:0.25px;color:#fff;">Power Manager</span>
  <span class="t" style="left:424.9px;top:237px;letter-spacing:0.05px;">Removable Drives</span>
  <span class="t" style="left:424.4px;top:258px;letter-spacing:0.25px;">and Media</span>
  <span class="t" style="left:56.9px;top:341px;letter-spacing:0.55px;">Firewall</span>
  <span class="t" style="left:240.4px;top:330px;letter-spacing:0.3px;">Install/Remove</span>
  <span class="t" style="left:240.4px;top:351px;letter-spacing:0.5px;">Software</span>
  <span class="t" style="left:424.5px;top:320px;letter-spacing:0.1px;">Package Update</span>
  <span class="t" style="left:424.4px;top:341px;letter-spacing:0.65px;">Indicator</span>
  <span class="t" style="left:424.5px;top:362px;letter-spacing:0.1px;">Preferences</span>
  <span class="t b" style="left:5.7px;top:155px;letter-spacing:1.05px;">Hardware</span>
  <span class="t b" style="left:5.5px;top:295px;letter-spacing:0.25px;">System</span>
 </div>
 <div class="btn" style="left:9px;width:108px"></div>
 <div class="btn" style="left:413px;width:108px;color:#8c8c8c"></div>
 <div class="btn" style="left:525px;width:108px"></div>
 <svg width="641" height="524" viewBox="191 110 641 524">
  <defs><radialGradient id="gHelp" cx=".4" cy=".3" r=".8"><stop offset="0" stop-color="#6ab4f2"/><stop offset="1" stop-color="#2f7fd0"/></radialGradient></defs>
  <circle cx="237" cy="612" r="7.3" fill="url(#gHelp)" stroke="#2f74bf" stroke-width=".8"/>
  <path d="M613 612 L618.5 606.5 V609.5 H625 V614.5 H618.5 V617.5Z" fill="#a9d58a" stroke="#86b868" stroke-width=".9" stroke-linejoin="round"/>
  <path d="M746 608 L753.5 615.5 M753.5 608 L746 615.5" stroke="#3c3c3c" stroke-width="1.7"/>
 </svg>
 <span class="t b" style="left:41.5px;top:492.5px;color:#fff;font-size:13.5px;">?</span>
 <span class="t" style="left:55.8px;top:492px;letter-spacing:0.55px;color:#333;">Help</span>
 <span class="t" style="left:438.3px;top:492px;letter-spacing:0.05px;color:#8b8b8b;text-shadow:0 1px 0 rgba(255,255,255,.6);">All Settings</span>
 <span class="t" style="left:568.9px;top:492px;letter-spacing:-0.25px;color:#333;">Close</span>
</div>
<div id="panel">
 <div class="abs" style="left:156px;top:0px;width:200px;height:24px;border-radius:3px;background:linear-gradient(#346a61,#2a4846)"></div>
 <div class="abs" style="left:677px;top:0;width:31px;height:24px;background:#256b60"></div>
 <div class="abs" style="left:708px;top:0;width:33px;height:24px;background:#1a1a1a"></div>
 <div class="abs" style="left:683px;top:3px;width:19px;height:16px;box-sizing:border-box;border:1px solid #fff;background:#6fb8aa"></div>
 <svg width="1024" height="25" viewBox="0 743 1024 25">
  <!-- geeko -->
  <g fill="none" stroke="#6cc02b" stroke-linecap="round">
   <path d="M5 749.5 Q9 747.3 13 748.5 Q17.8 750.3 17.3 755.5 Q16.8 760.5 12.5 762.5 Q8.5 764 4.8 762.3" stroke-width="2.2"/>
   <path d="M7.5 756.3 Q10 759.3 16.5 758" stroke-width="1.5"/>
   <circle cx="12.3" cy="754.3" r="2.3" stroke-width="1"/>
  </g>
  <circle cx="12.3" cy="754.3" r=".8" fill="#6cc02b"/>
  <path d="M4.5 762.5 Q9 760 14.5 760.5 L12 763.3 Q8 764.5 4.5 762.5Z" fill="#6cc02b"/>
  <!-- separator -->
  <rect x="117.3" y="747.5" width="1.6" height="17.5" fill="#8d8d8d"/>
  <!-- show desktop -->
  <rect x="127" y="749.3" width="16" height="3" fill="#0a0a0a"/>
  <rect x="127" y="751.8" width="16" height="11.2" fill="#4f80b6"/>
  <rect x="127" y="752" width="16" height="1" fill="#7fa8d4"/>
  <rect x="130.5" y="758" width="9" height="5" fill="#1f3a58"/>
  <!-- handle -->
  <path d="M150 751.7 H154 M150 755.6 H154 M150 759.5 H154" stroke="#b0b0b0" stroke-width="1.2"/>
  <!-- settings mini icon -->
  <rect x="160.2" y="748.8" width="14" height="14" rx="1" fill="#ebebeb" stroke="#9a9a9a" stroke-width=".6"/>
  <rect x="162.2" y="751.5" width="4" height="8" rx=".8" fill="#fbfbfb" stroke="#777" stroke-width=".7"/>
  <rect x="162.5" y="751.8" width="3.4" height="3.5" fill="#9a9a9a"/>
  <rect x="168.2" y="751.5" width="4" height="8" rx=".8" fill="#fbfbfb" stroke="#5a8fce" stroke-width=".7"/>
  <rect x="168.5" y="755.7" width="3.4" height="3.5" fill="#3f8fe2"/>
  <!-- volume -->
  <g fill="#fff">
   <path d="M745.8 753.5 H748.5 L752.5 749.8 V762.2 L748.5 758.5 H745.8Z"/>
  </g>
  <g fill="none" stroke="#fff" stroke-linecap="round">
   <path d="M754.5 753.5 Q756 756 754.5 758.5" stroke-width="1.3"/>
   <path d="M756.8 751.3 Q759.8 756 756.8 760.7" stroke-width="1.4"/>
   <path d="M759 749.3 Q763 756 759 762.8" stroke-width="1.4"/>
  </g>
  <!-- power -->
  <circle cx="780" cy="756" r="7.3" fill="#fff"/>
  <path d="M782 750.3 L776.7 757 H779.7 L778 762 L783.3 755 H780.3Z" fill="#1d2527"/>
  <!-- sync -->
  <g fill="none" stroke="#fff" stroke-width="1.8">
   <path d="M798.8 755.5 A5 5 0 0 1 807 752"/>
   <path d="M808.8 756.5 A5 5 0 0 1 800.6 760"/>
  </g>
  <path d="M804.3 753.8 L809 749.2 L809.3 754.3Z M803.3 758.2 L798.6 762.8 L798.3 757.7Z" fill="#fff" stroke="#fff" stroke-width=".8" stroke-linejoin="round"/>
  <!-- network -->
  <path d="M847.8 747 L852.6 752.3 H849.6 V759.3 H846 V752.3 H843Z" fill="#fff"/>
  <path d="M855.8 763.7 L860.8 758.4 H857.6 V752 H854 V758.4 H850.8Z" fill="#fff"/>
  <!-- bell -->
  <path d="M1011 748.8 Q1015.3 749.5 1015.3 754.5 Q1015.3 759 1017.3 760.8 H1004.7 Q1006.7 759 1006.7 754.5 Q1006.7 749.5 1011 748.8Z" fill="#fff"/>
  <path d="M1009.2 761.8 H1012.8 Q1012.3 763.8 1011 763.8 Q1009.7 763.8 1009.2 761.8Z" fill="#fff"/>
 </svg>
 <span class="t" style="left:24.2px;top:1.5px;letter-spacing:0.2px;color:#fff;">Applications</span>
 <span class="t" style="left:183.8px;top:1.5px;letter-spacing:0.15px;color:#fff;">Settings</span>
 <span class="t b" style="left:819.6px;top:2.6px;letter-spacing:0.05px;color:#4858ad;font-size:13.5px;">DE</span>
 <span class="t" style="left:874.9px;top:1.5px;letter-spacing:-0.05px;color:#fff;">Fri 09 Aug, 13:32</span>
</div>
</body>
</html>
